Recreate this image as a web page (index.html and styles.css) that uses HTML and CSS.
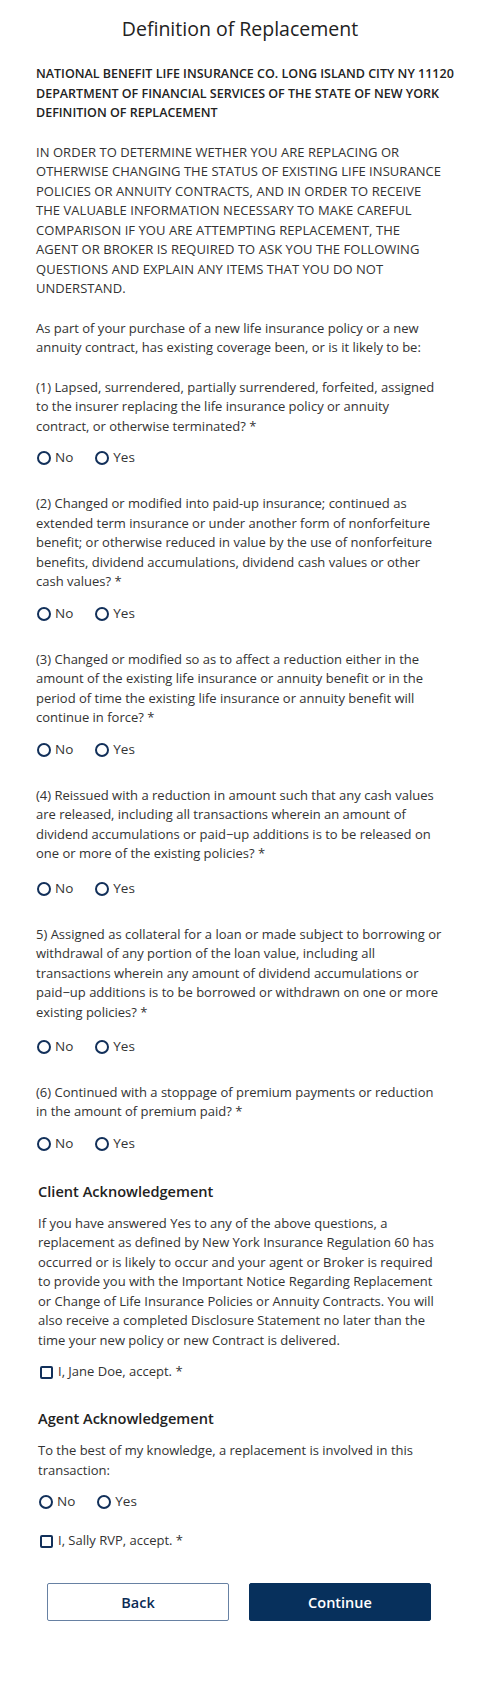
FILE: index.html
```html
<!DOCTYPE html>
<html>
<head>
<meta charset="utf-8">
<link rel="stylesheet" href="styles.css">
</head>
<body>
<main class="page">
  <h1 class="title">Definition of Replacement</h1>
  <p class="notice"><span class="nw">NATIONAL BENEFIT LIFE INSURANCE CO. LONG ISLAND CITY NY 11120</span><br><span class="nw">DEPARTMENT OF FINANCIAL SERVICES OF THE STATE OF NEW YORK</span><br><span class="nw">DEFINITION OF REPLACEMENT</span></p>
  <p class="para para-caps">IN ORDER TO DETERMINE WETHER YOU ARE REPLACING OR OTHERWISE CHANGING THE STATUS OF EXISTING LIFE INSURANCE POLICIES OR ANNUITY CONTRACTS, AND IN ORDER TO RECEIVE THE VALUABLE INFORMATION NECESSARY TO MAKE CAREFUL COMPARISON IF YOU ARE ATTEMPTING REPLACEMENT, THE AGENT OR BROKER IS REQUIRED TO ASK YOU THE FOLLOWING QUESTIONS AND EXPLAIN ANY ITEMS THAT YOU DO NOT UNDERSTAND.</p>
  <p class="para">As part of your purchase of a new life insurance policy or a new annuity contract, has existing coverage been, or is it likely to be:</p>

  <div class="question">
    <p class="qtext">(1) Lapsed, surrendered, partially surrendered, forfeited, assigned to the insurer replacing the life insurance policy or annuity contract, or otherwise terminated? *</p>
    <div class="radios"><label class="radio"><span class="circle"></span>No</label><label class="radio"><span class="circle"></span>Yes</label></div>
  </div>
  <div class="question">
    <p class="qtext">(2) Changed or modified into paid-up insurance; continued as extended term insurance or under another form of nonforfeiture benefit; or otherwise reduced in value by the use of nonforfeiture benefits, dividend accumulations, dividend cash values or other cash values? *</p>
    <div class="radios"><label class="radio"><span class="circle"></span>No</label><label class="radio"><span class="circle"></span>Yes</label></div>
  </div>
  <div class="question">
    <p class="qtext">(3) Changed or modified so as to affect a reduction either in the amount of the existing life insurance or annuity benefit or in the period of time the existing life insurance or annuity benefit will continue in force? *</p>
    <div class="radios"><label class="radio"><span class="circle"></span>No</label><label class="radio"><span class="circle"></span>Yes</label></div>
  </div>
  <div class="question">
    <p class="qtext qtext-tall">(4) Reissued with a reduction in amount such that any cash values are released, including all transactions wherein an amount of dividend accumulations or paid&minus;up additions is to be released on one or more of the existing policies? *</p>
    <div class="radios"><label class="radio"><span class="circle"></span>No</label><label class="radio"><span class="circle"></span>Yes</label></div>
  </div>
  <div class="question">
    <p class="qtext qtext-tall">5) Assigned as collateral for a loan or made subject to borrowing or withdrawal of any portion of the loan value, including all transactions wherein any amount of dividend accumulations or paid&minus;up additions is to be borrowed or withdrawn on one or more existing policies? *</p>
    <div class="radios"><label class="radio"><span class="circle"></span>No</label><label class="radio"><span class="circle"></span>Yes</label></div>
  </div>
  <div class="question">
    <p class="qtext">(6) Continued with a stoppage of premium payments or reduction in the amount of premium paid? *</p>
    <div class="radios"><label class="radio"><span class="circle"></span>No</label><label class="radio"><span class="circle"></span>Yes</label></div>
  </div>

  <section class="ack">
    <h2 class="ack-title">Client Acknowledgement</h2>
    <p class="ack-text">If you have answered Yes to any of the above questions, a replacement as defined by New York Insurance Regulation 60 has occurred or is likely to occur and your agent or Broker is required to provide you with the Important Notice Regarding Replacement or Change of Life Insurance Policies or Annuity Contracts. You will also receive a completed Disclosure Statement no later than the time your new policy or new Contract is delivered.</p>
    <label class="check"><span class="box"></span>I, Jane Doe, accept. *</label>
  </section>

  <section class="ack">
    <h2 class="ack-title">Agent Acknowledgement</h2>
    <p class="ack-text">To the best of my knowledge, a replacement is involved in this transaction:</p>
    <div class="radios"><label class="radio"><span class="circle"></span>No</label><label class="radio"><span class="circle"></span>Yes</label></div>
    <label class="check agent-check"><span class="box"></span>I, Sally RVP, accept. *</label>
  </section>

  <div class="actions">
    <button class="btn btn-back">Back</button>
    <button class="btn btn-continue">Continue</button>
  </div>
</main>
</body>
</html>
```

FILE: styles.css
```css
* { box-sizing: border-box; }
html, body { margin: 0; padding: 0; background: #fff; }
body {
  font-family: "Open Sans", "Noto Sans", sans-serif;
  font-size: 13px;
  line-height: 19.5px;
  color: #333;
}
.page {
  width: 408px;
  margin-left: 36px;
  padding-top: 16px;
  padding-bottom: 60px;
}
.title {
  margin: 0 0 22px;
  font-size: 19.5px;
  line-height: 26px;
  font-weight: 400;
  text-align: center;
  color: #222;
}
.notice {
  margin: 0 0 20px;
  font-size: 12.5px;
  font-weight: 600;
  color: #222;
}
.nw { white-space: nowrap; }
.para { margin: 0 0 20px; }
.para-caps { letter-spacing: 0.05px; }
.question { margin-bottom: 26px; }
.qtext { margin: 0 0 12px; }
.qtext-tall { margin-bottom: 15px; }
.question:nth-of-type(5) .qtext-tall { margin-bottom: 14.5px; }
.radios {
  display: flex;
  gap: 21px;
  height: 20px;
  align-items: center;
}
.radio {
  display: flex;
  align-items: center;
  gap: 4px;
  font-size: 13.5px;
}
.circle {
  width: 14px;
  height: 14px;
  border: 2px solid #12305a;
  border-radius: 50%;
  margin-left: 1px;
}
.ack { padding-left: 2px; margin-bottom: 25px; }
.ack-title {
  margin: 0 0 12px;
  font-size: 14.6px;
  line-height: 22px;
  font-weight: 600;
  color: #222;
}
.ack-text { margin: 0 0 12px; }
.ack .radios { margin-top: 1px; }
.check {
  display: flex;
  align-items: center;
  gap: 5px;
  height: 20px;
}
.box {
  width: 13px;
  height: 13px;
  border: 2px solid #12305a;
  border-radius: 2px;
  margin-left: 2px;
}
.agent-check { margin-top: 19px; }
.actions {
  display: flex;
  gap: 20px;
  margin-left: 11px;
  margin-top: 32px;
}
.btn {
  width: 182px;
  height: 38px;
  font-family: "Open Sans", "Noto Sans", sans-serif;
  font-size: 14.5px;
  font-weight: 600;
  border-radius: 2px;
  cursor: pointer;
}
.btn-back {
  background: #fff;
  color: #0b2b55;
  border: 1.5px solid #6781a3;
}
.btn-continue {
  background: #07305c;
  color: #fff;
  border: 1px solid #07305c;
}
```
